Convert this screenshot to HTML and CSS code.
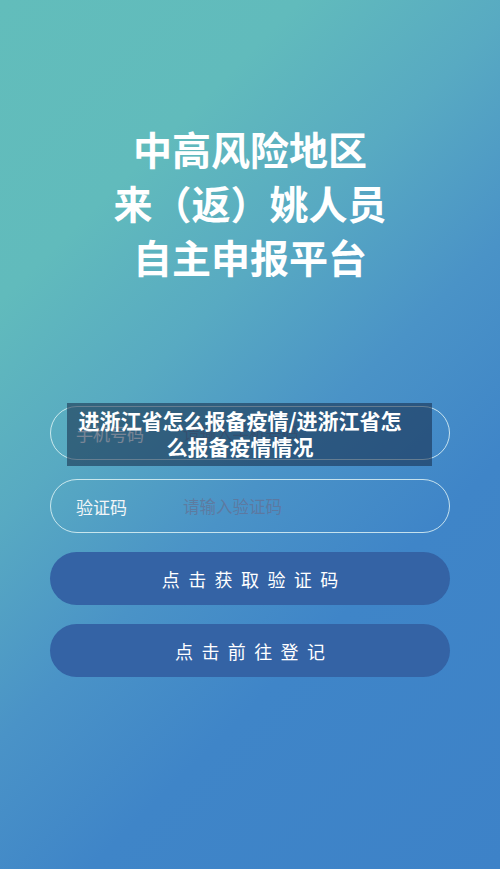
FILE: index.html
```html
<!DOCTYPE html>
<html lang="zh-CN">
<head>
  <meta charset="UTF-8" />
  <meta name="viewport" content="width=device-width, initial-scale=1.0"/>
  <title>中高风险地区来（返）姚人员自主申报平台</title>
  <link rel="stylesheet" href="styles.css">
</head>
<body>

  <div class="page">
    <h1 class="title">中高风险地区<br>来（返）姚人员<br>自主申报平台</h1>

    <div class="form">
      <div class="field">
        <label for="phone">手机号码</label>
        <input type="tel" id="phone" placeholder="请输入手机号码" />
        <div class="caption">进浙江省怎么报备疫情/进浙江省怎么报备疫情情况</div>
      </div>

      <div class="field">
        <label for="code">验证码</label>
        <input type="text" id="code" placeholder="请输入验证码" />
      </div>

      <button class="btn btn-code">点击获取验证码</button>
      <button class="btn btn-go">点击前往登记</button>
    </div>
  </div>

</body>
</html>
```

FILE: styles.css
```css
html, body {
  margin: 0;
  padding: 0;
  height: 100%;
}

body {
  background: linear-gradient(135deg, #62bdbb 0%, #61bbbc 22%, #58aac2 38%, #4a93c7 54%, #3f85c8 70%, #3d82c8 100%);
  font-family: "Noto Sans CJK SC", "Noto Sans", sans-serif;
  color: #fff;
}

.page {
  padding-top: 121px;
}

.title {
  margin: 0;
  text-align: center;
  font-size: 39px;
  line-height: 54px;
  font-weight: 700;
  color: #fff;
}

.form {
  width: 400px;
  margin: 123px auto 0;
  display: flex;
  flex-direction: column;
  gap: 19px;
}

.field {
  position: relative;
  height: 54px;
  box-sizing: border-box;
  border: 1.5px solid rgba(230, 248, 248, 0.8);
  border-radius: 27px;
  display: flex;
  align-items: center;
  padding-left: 25px;
}

.field label {
  width: 107px;
  flex-shrink: 0;
  font-size: 17px;
  color: #f2f6f8;
}

.field input {
  flex: 1;
  min-width: 0;
  background: transparent;
  border: none;
  outline: none;
  padding: 0;
  font-family: inherit;
  font-size: 16.5px;
  color: #fff;
}

.field input::placeholder {
  color: rgba(105, 105, 135, 0.6);
}

.caption {
  position: absolute;
  left: 16px;
  top: -4px;
  width: 365px;
  height: 63px;
  box-sizing: border-box;
  padding: 4px 28px 0 9px;
  background: rgba(20, 40, 70, 0.55);
  font-size: 21px;
  line-height: 26px;
  font-weight: 700;
  text-align: center;
  color: #fff;
}

.btn {
  height: 53px;
  border: none;
  border-radius: 27px;
  background: #3463a5;
  color: #fff;
  font-family: inherit;
  font-size: 18px;
  letter-spacing: 8.4px;
  text-indent: 8.4px;
  cursor: pointer;
}
```
